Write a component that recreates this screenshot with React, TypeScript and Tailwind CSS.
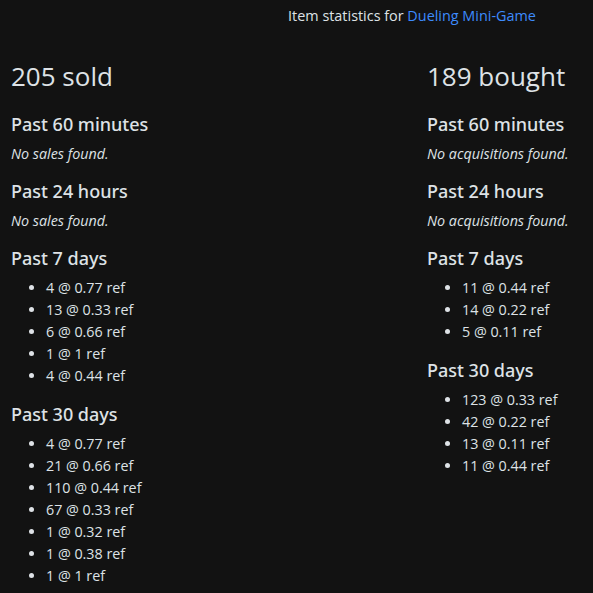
import React from "react";

type Entry = string;

function Section({ title, items, empty }: { title: string; items?: Entry[]; empty?: string }) {
  return (
    <div>
      <h4
        className="text-[18px] leading-[24px] font-medium mb-[7px]"
        style={{ fontFamily: '"Noto Sans", "Open Sans", sans-serif' }}
      >
        {title}
      </h4>
      {items ? (
        <ul className="list-disc pl-[35px] mb-[15px] text-[14.3px] leading-[22px]">
          {items.map((t, i) => (
            <li key={i}>{t}</li>
          ))}
        </ul>
      ) : (
        <p className="italic text-[14.3px] leading-[22px] mb-[14px]">{empty}</p>
      )}
    </div>
  );
}

export default function App() {
  return (
    <div
      className="w-[593px] h-[593px] overflow-hidden bg-[#121212] text-[#dee2e6]"
      style={{ fontFamily: '"Open Sans", "Noto Sans", sans-serif' }}
    >
      <div className="w-[832px]">
        <div className="text-center text-[14.4px] leading-[22px] pt-[5px] pr-[8px]">
          Item statistics for <a className="text-[#3d8bfd]">Dueling Mini-Game</a>
        </div>
        <div className="grid grid-cols-2 mt-[32px]">
          <div className="px-[11px]">
            <h2 className="text-[26px] leading-[34px] mb-[19px]">205 sold</h2>
            <Section title="Past 60 minutes" empty="No sales found." />
            <Section title="Past 24 hours" empty="No sales found." />
            <Section
              title="Past 7 days"
              items={["4 @ 0.77 ref", "13 @ 0.33 ref", "6 @ 0.66 ref", "1 @ 1 ref", "4 @ 0.44 ref"]}
            />
            <Section
              title="Past 30 days"
              items={[
                "4 @ 0.77 ref",
                "21 @ 0.66 ref",
                "110 @ 0.44 ref",
                "67 @ 0.33 ref",
                "1 @ 0.32 ref",
                "1 @ 0.38 ref",
                "1 @ 1 ref",
              ]}
            />
          </div>
          <div className="px-[11px]">
            <h2 className="text-[26px] leading-[34px] mb-[19px]">189 bought</h2>
            <Section title="Past 60 minutes" empty="No acquisitions found." />
            <Section title="Past 24 hours" empty="No acquisitions found." />
            <Section title="Past 7 days" items={["11 @ 0.44 ref", "14 @ 0.22 ref", "5 @ 0.11 ref"]} />
            <Section
              title="Past 30 days"
              items={["123 @ 0.33 ref", "42 @ 0.22 ref", "13 @ 0.11 ref", "11 @ 0.44 ref"]}
            />
          </div>
        </div>
      </div>
    </div>
  );
}
